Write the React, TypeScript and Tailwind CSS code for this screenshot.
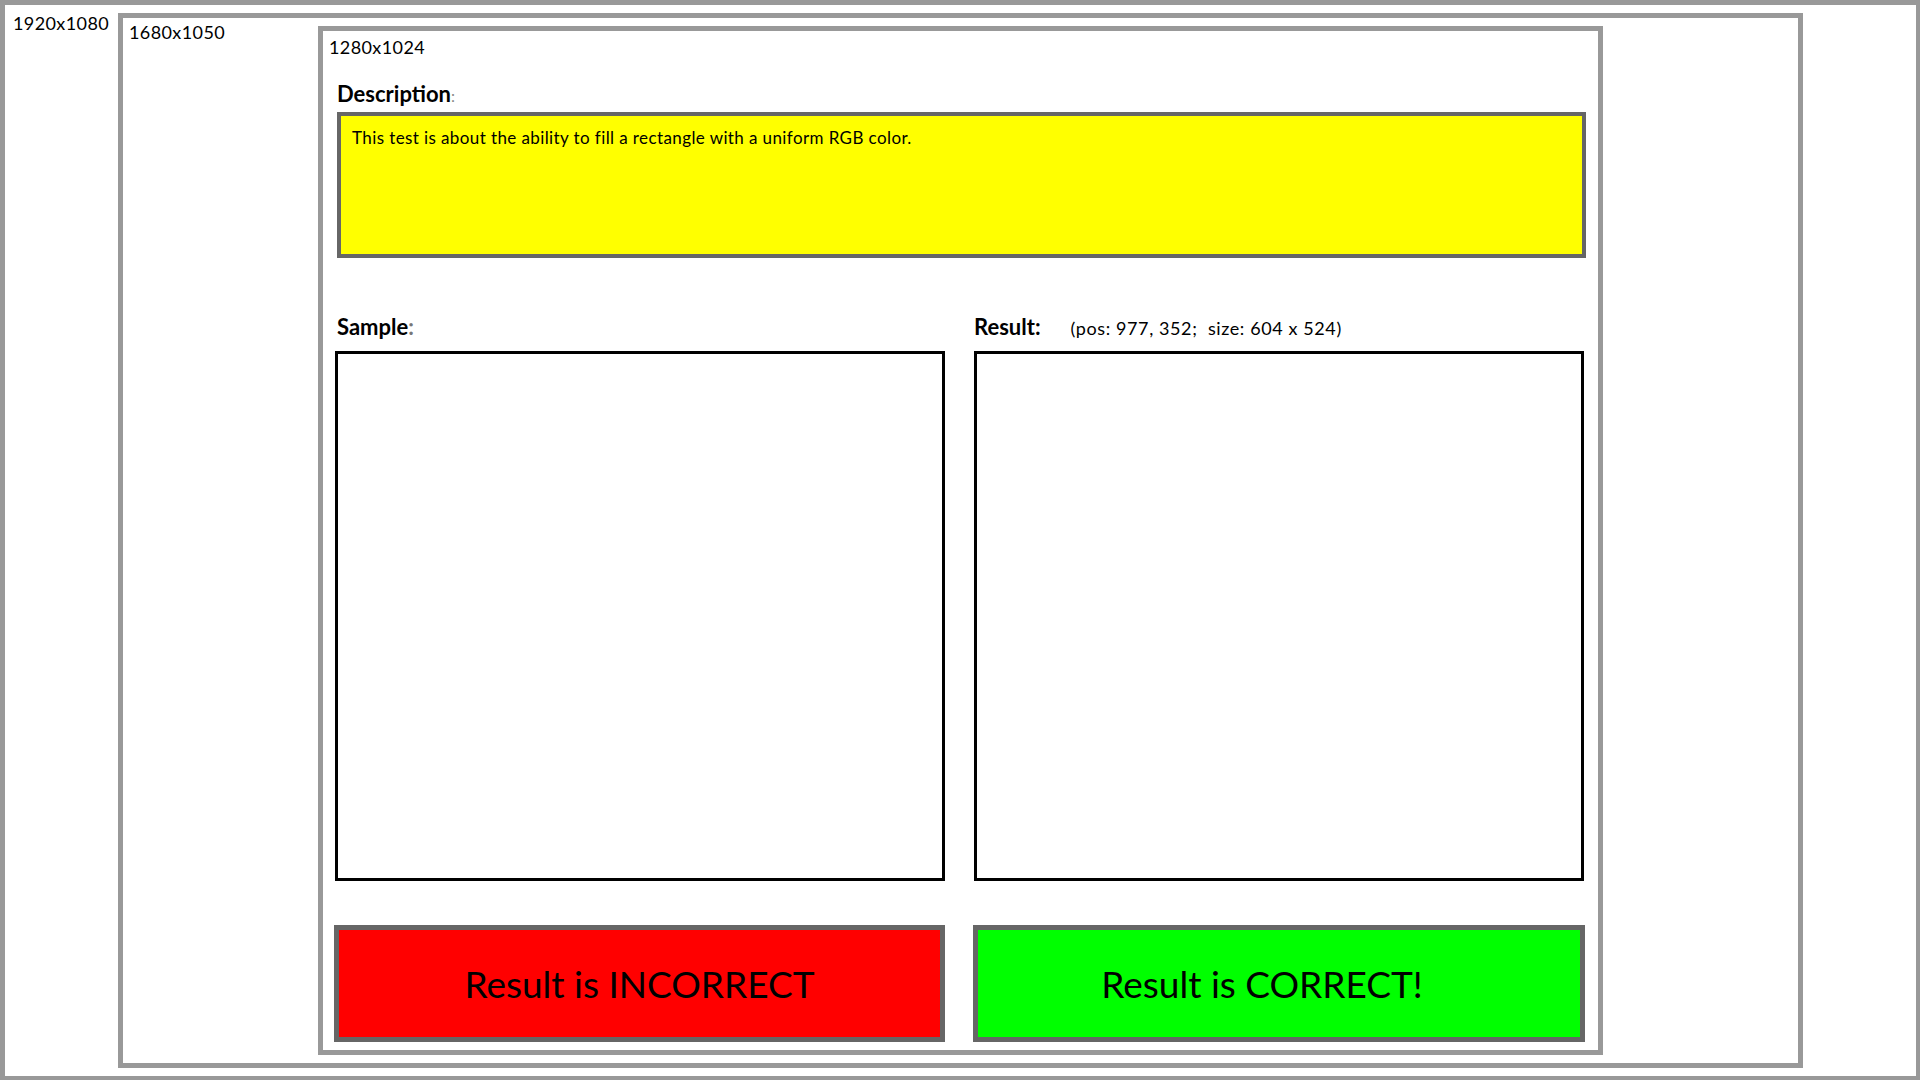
export default function App() {
  return (
    <div className="h-[1080px] w-[1920px] overflow-hidden bg-white font-[Lato,sans-serif] text-black">
      {/* 1920x1080 frame */}
      <div className="flex h-full w-full items-start border-t-[5px] border-r-[4px] border-b-[4px] border-l-[5px] border-[#999]">
        <div className="w-[113px] shrink-0 pt-[9px] pl-[8px] text-[18px] leading-none tracking-[0.4px]">1920x1080</div>

        {/* 1680x1050 frame */}
        <div className="mt-[8px] flex h-[1055px] w-[1685px] shrink-0 items-start border-[5px] border-[#999]">
          <div className="w-[195px] shrink-0 pt-[5px] pl-[6px] text-[18px] leading-none tracking-[0.4px]">1680x1050</div>

          {/* 1280x1024 frame */}
          <div className="mt-[8px] h-[1029px] w-[1285px] shrink-0 border-[5px] border-[#999]">
            <div className="pt-[7px] pl-[6px] text-[18px] leading-none tracking-[0.4px]">1280x1024</div>

            <div className="mt-[27px] ml-[14px] text-[22px] leading-none font-bold">
              Description<span className="text-[16px] font-normal text-[#888]">:</span>
            </div>
            <div className="mt-[7px] ml-[14px] h-[146px] w-[1249px] border-[4px] border-[#666] bg-[#ffff00] pt-[13px] pl-[11px] text-[17px] leading-none tracking-[0.4px]">
              This test is about the ability to fill a rectangle with a uniform RGB color.
            </div>

            <div className="mt-[58px] grid grid-cols-[610px_610px] gap-x-[29px] pl-[12px]">
              <div>
                <div className="pl-[2px] text-[22px] leading-none font-bold">
                  Sample<span className="text-[#777]">:</span>
                </div>
                <div className="mt-[13px] h-[530px] border-[3px] border-black bg-white" />
              </div>
              <div>
                <div className="flex items-baseline leading-none">
                  <span className="text-[22px] font-bold">Result:</span>
                  <span className="ml-[30px] text-[18px] tracking-[0.6px]">(pos: 977, 352;&nbsp; size: 604 x 524)</span>
                </div>
                <div className="mt-[13px] h-[530px] border-[3px] border-black bg-white" />
              </div>
            </div>

            <div className="mt-[44px] grid grid-cols-[611px_612px] gap-x-[28px] pl-[11px]">
              <div className="flex h-[117px] items-center justify-center border-[5px] border-[#666] bg-[#ff0000] text-[37px] leading-none">
                Result is INCORRECT
              </div>
              <div className="flex h-[117px] items-center justify-center border-[5px] border-[#666] bg-[#00ff00] pr-[34px] text-[37px] leading-none">
                Result is CORRECT!
              </div>
            </div>
          </div>
        </div>
      </div>
    </div>
  );
}
